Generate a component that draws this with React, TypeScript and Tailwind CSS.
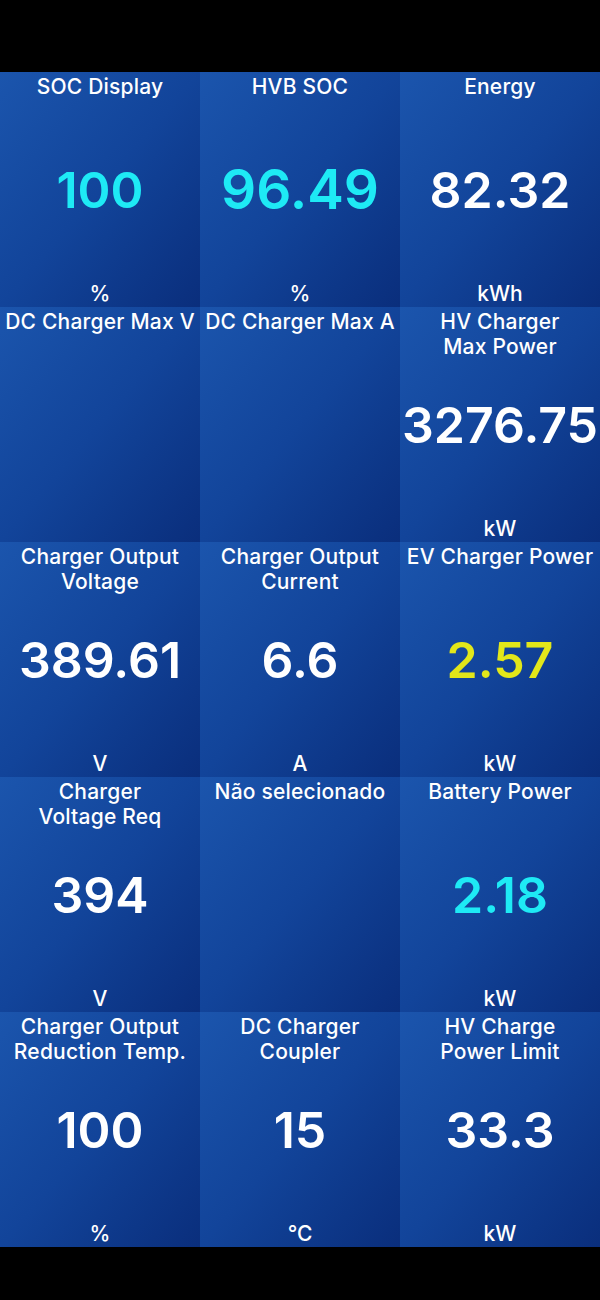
import React from 'react';

interface Gauge {
    title: string;
    value?: string;
    unit?: string;
    color?: string;
    big?: boolean;
}

const gauges: Gauge[] = [
    { title: 'SOC Display', value: '100', unit: '%', color: 'text-[#1eeaf5]' },
    { title: 'HVB SOC', value: '96.49', unit: '%', color: 'text-[#1eeaf5]', big: true },
    { title: 'Energy', value: '82.32', unit: 'kWh' },
    { title: 'DC Charger Max V' },
    { title: 'DC Charger Max A' },
    { title: 'HV Charger\nMax Power', value: '3276.75', unit: 'kW' },
    { title: 'Charger Output\nVoltage', value: '389.61', unit: 'V' },
    { title: 'Charger Output\nCurrent', value: '6.6', unit: 'A' },
    { title: 'EV Charger Power', value: '2.57', unit: 'kW', color: 'text-[#e2e71a]' },
    { title: 'Charger\nVoltage Req', value: '394', unit: 'V' },
    { title: 'Não selecionado' },
    { title: 'Battery Power', value: '2.18', unit: 'kW', color: 'text-[#1eeaf5]' },
    { title: 'Charger Output\nReduction Temp.', value: '100', unit: '%' },
    { title: 'DC Charger\nCoupler', value: '15', unit: '°C' },
    { title: 'HV Charge\nPower Limit', value: '33.3', unit: 'kW' },
];

const GaugeCell: React.FC<{ g: Gauge }> = ({ g }) => {
    return (
        <div className="grid h-[235px] bg-linear-to-br from-[#1b55ad] via-[#12449a] to-[#0a2e7c] text-white">
            <p className="[grid-area:1/1] self-start whitespace-pre-line pt-[2px] text-center text-[21px] leading-[25px] font-medium tracking-[0.01em]">
                {g.title}
            </p>
            {g.value && (
                <p
                    className={`[grid-area:1/1] self-center text-center font-semibold ${g.big ? 'text-[55px]' : 'text-[50px]'} leading-none ${g.color ?? 'text-white'}`}
                >
                    {g.value}
                </p>
            )}
            {g.unit && (
                <p className="[grid-area:1/1] self-end pb-px text-center text-[21px] leading-[25px] font-medium">
                    {g.unit}
                </p>
            )}
        </div>
    );
};

const App: React.FC = () => {
    return (
        <div className="h-[1300px] w-[600px] bg-black font-['Inter','Liberation_Sans',sans-serif]">
            <div className="h-[72px]" />
            <div className="grid grid-cols-3">
                {gauges.map((g, i) => (
                    <GaugeCell key={i} g={g} />
                ))}
            </div>
        </div>
    );
};

export default App;
